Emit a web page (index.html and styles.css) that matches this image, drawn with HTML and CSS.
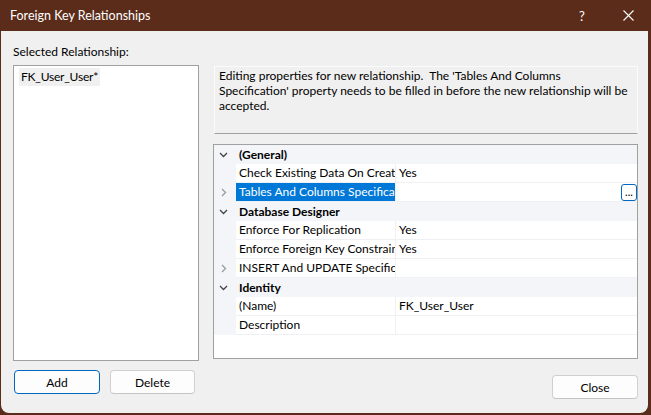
FILE: index.html
```html
<!DOCTYPE html>
<html>
<head>
<meta charset="utf-8">
<link rel="stylesheet" href="styles.css">
</head>
<body>
<div class="window">
  <div class="titlebar">
    <span class="title">Foreign Key Relationships</span>
    <div class="tb-btn help">?</div>
    <div class="tb-btn">
      <svg width="11" height="11" viewBox="0 0 11 11"><path d="M0.5 0.5 L10.5 10.5 M10.5 0.5 L0.5 10.5" stroke="#fff" stroke-width="1.1" fill="none"/></svg>
    </div>
  </div>
  <div class="pane">
    <div class="left">
      <div class="label">Selected Relationship:</div>
      <div class="listbox"><span class="list-item">FK_User_User*</span></div>
      <div class="btn-row">
        <button class="btn btn-default btn-add">Add</button>
        <button class="btn btn-delete">Delete</button>
      </div>
    </div>
    <div class="right">
      <div class="desc">Editing properties for new relationship.&nbsp; The 'Tables And Columns Specification' property needs to be filled in before the new relationship will be accepted.</div>
      <div class="propgrid">
        <div class="row">
          <div class="gutter"><svg class="chev" width="9" height="6" viewBox="0 0 9 6"><path d="M1 1 L4.5 4.5 L8 1" stroke="#444" stroke-width="1.3" fill="none"/></svg></div>
          <div class="cat">(General)</div>
        </div>
        <div class="row">
          <div class="gutter"></div>
          <div class="name">Check Existing Data On Creation Or Re-Enabling</div>
          <div class="value">Yes</div>
        </div>
        <div class="row">
          <div class="gutter"><svg class="chev" width="6" height="9" viewBox="0 0 6 9"><path d="M1 1 L4.5 4.5 L1 8" stroke="#9a9a9a" stroke-width="1.3" fill="none"/></svg></div>
          <div class="name selected">Tables And Columns Specification</div>
          <div class="value"><span class="ellipsis">...</span></div>
        </div>
        <div class="row">
          <div class="gutter"><svg class="chev" width="9" height="6" viewBox="0 0 9 6"><path d="M1 1 L4.5 4.5 L8 1" stroke="#444" stroke-width="1.3" fill="none"/></svg></div>
          <div class="cat">Database Designer</div>
        </div>
        <div class="row">
          <div class="gutter"></div>
          <div class="name">Enforce For Replication</div>
          <div class="value">Yes</div>
        </div>
        <div class="row">
          <div class="gutter"></div>
          <div class="name">Enforce Foreign Key Constraint</div>
          <div class="value">Yes</div>
        </div>
        <div class="row">
          <div class="gutter"><svg class="chev" width="6" height="9" viewBox="0 0 6 9"><path d="M1 1 L4.5 4.5 L1 8" stroke="#9a9a9a" stroke-width="1.3" fill="none"/></svg></div>
          <div class="name">INSERT And UPDATE Specification</div>
          <div class="value"></div>
        </div>
        <div class="row">
          <div class="gutter"><svg class="chev" width="9" height="6" viewBox="0 0 9 6"><path d="M1 1 L4.5 4.5 L8 1" stroke="#444" stroke-width="1.3" fill="none"/></svg></div>
          <div class="cat">Identity</div>
        </div>
        <div class="row">
          <div class="gutter"></div>
          <div class="name">(Name)</div>
          <div class="value">FK_User_User</div>
        </div>
        <div class="row">
          <div class="gutter"></div>
          <div class="name">Description</div>
          <div class="value"></div>
        </div>
      </div>
      <div class="close-row">
        <button class="btn btn-close">Close</button>
      </div>
    </div>
  </div>
</div>
</body>
</html>
```

FILE: styles.css
```css
* { box-sizing: border-box; }
html, body { margin: 0; padding: 0; }
body {
  background: #5b2c1a;
  width: 651px;
  height: 415px;
  overflow: hidden;
  font-family: Lato, "Liberation Sans", sans-serif;
  font-size: 12px;
  color: #000;
}
.titlebar {
  height: 31px;
  display: flex;
  align-items: center;
  padding-left: 10px;
  color: #fff;
}
.title { flex: 1; font-size: 12.5px; }
.tb-btn {
  width: 46px;
  height: 31px;
  display: flex;
  align-items: center;
  justify-content: center;
}
.help { font-size: 13px; }
.pane {
  margin-left: 1px;
  width: 647px;
  height: 382px;
  background: #f0f0f0;
  border-radius: 0 0 8px 8px;
  display: flex;
  padding: 13px 0 0 12px;
}
.left {
  width: 186px;
  display: flex;
  flex-direction: column;
}
.label { height: 16px; line-height: 16px; }
.listbox {
  margin-top: 5px;
  height: 296px;
  background: #fff;
  border: 1px solid #a0a0a0;
  padding: 2px 5px;
}
.list-item {
  display: inline-block;
  height: 18px;
  line-height: 18px;
  padding: 0 2px;
  background: #f0f0f0;
  letter-spacing: -0.2px;
}
.btn-row {
  margin-top: 9px;
  padding-left: 1px;
  display: flex;
  gap: 10px;
}
.btn {
  height: 24px;
  border: 1px solid #d0d0d0;
  border-bottom-color: #c4c4c4;
  border-radius: 4px;
  background: #fdfdfd;
  font: inherit;
  color: #000;
  padding: 0;
}
.btn-default { border: 1px solid #0067c0; }
.btn-add { width: 86px; }
.btn-delete { width: 85px; }
.btn-close { width: 86px; }
.right {
  margin-left: 14px;
  width: 425px;
  display: flex;
  flex-direction: column;
}
.desc {
  margin-top: 22px;
  margin-left: 1px;
  height: 68px;
  border: 1px solid #fbfbfb;
  border-bottom: 1px solid #a0a0a0;
  padding: 1px 4px 0;
  line-height: 15px;
}
.propgrid {
  margin-top: 10px;
  height: 215px;
  border: 1px solid #a0a0a0;
  background: #fff;
}
.row {
  display: flex;
  height: 19px;
}
.gutter {
  width: 22px;
  flex: none;
  background: #f3f5f9;
  display: flex;
  align-items: center;
  justify-content: center;
  padding-right: 3px;
}
.cat {
  flex: 1;
  background: #f3f5f9;
  font-weight: bold;
  padding-left: 3px;
  line-height: 19px;
}
.name {
  width: 160px;
  flex: none;
  border-right: 1px solid #eef0f4;
  border-bottom: 1px solid #eef0f4;
  padding-left: 3px;
  line-height: 18px;
  white-space: nowrap;
  overflow: hidden;
}
.name.selected {
  background: #0078d7;
  color: #fff;
}
.value {
  flex: 1;
  border-bottom: 1px solid #eef0f4;
  padding-left: 3px;
  line-height: 18px;
  display: flex;
  align-items: center;
}
.ellipsis {
  margin-left: auto;
  width: 16px;
  height: 17px;
  border: 1px solid #0067c0;
  border-radius: 3px;
  background: #fff;
  font-size: 11px;
  line-height: 13px;
  text-align: center;
}
.close-row {
  margin-top: 16px;
  display: flex;
  justify-content: flex-end;
}
```
